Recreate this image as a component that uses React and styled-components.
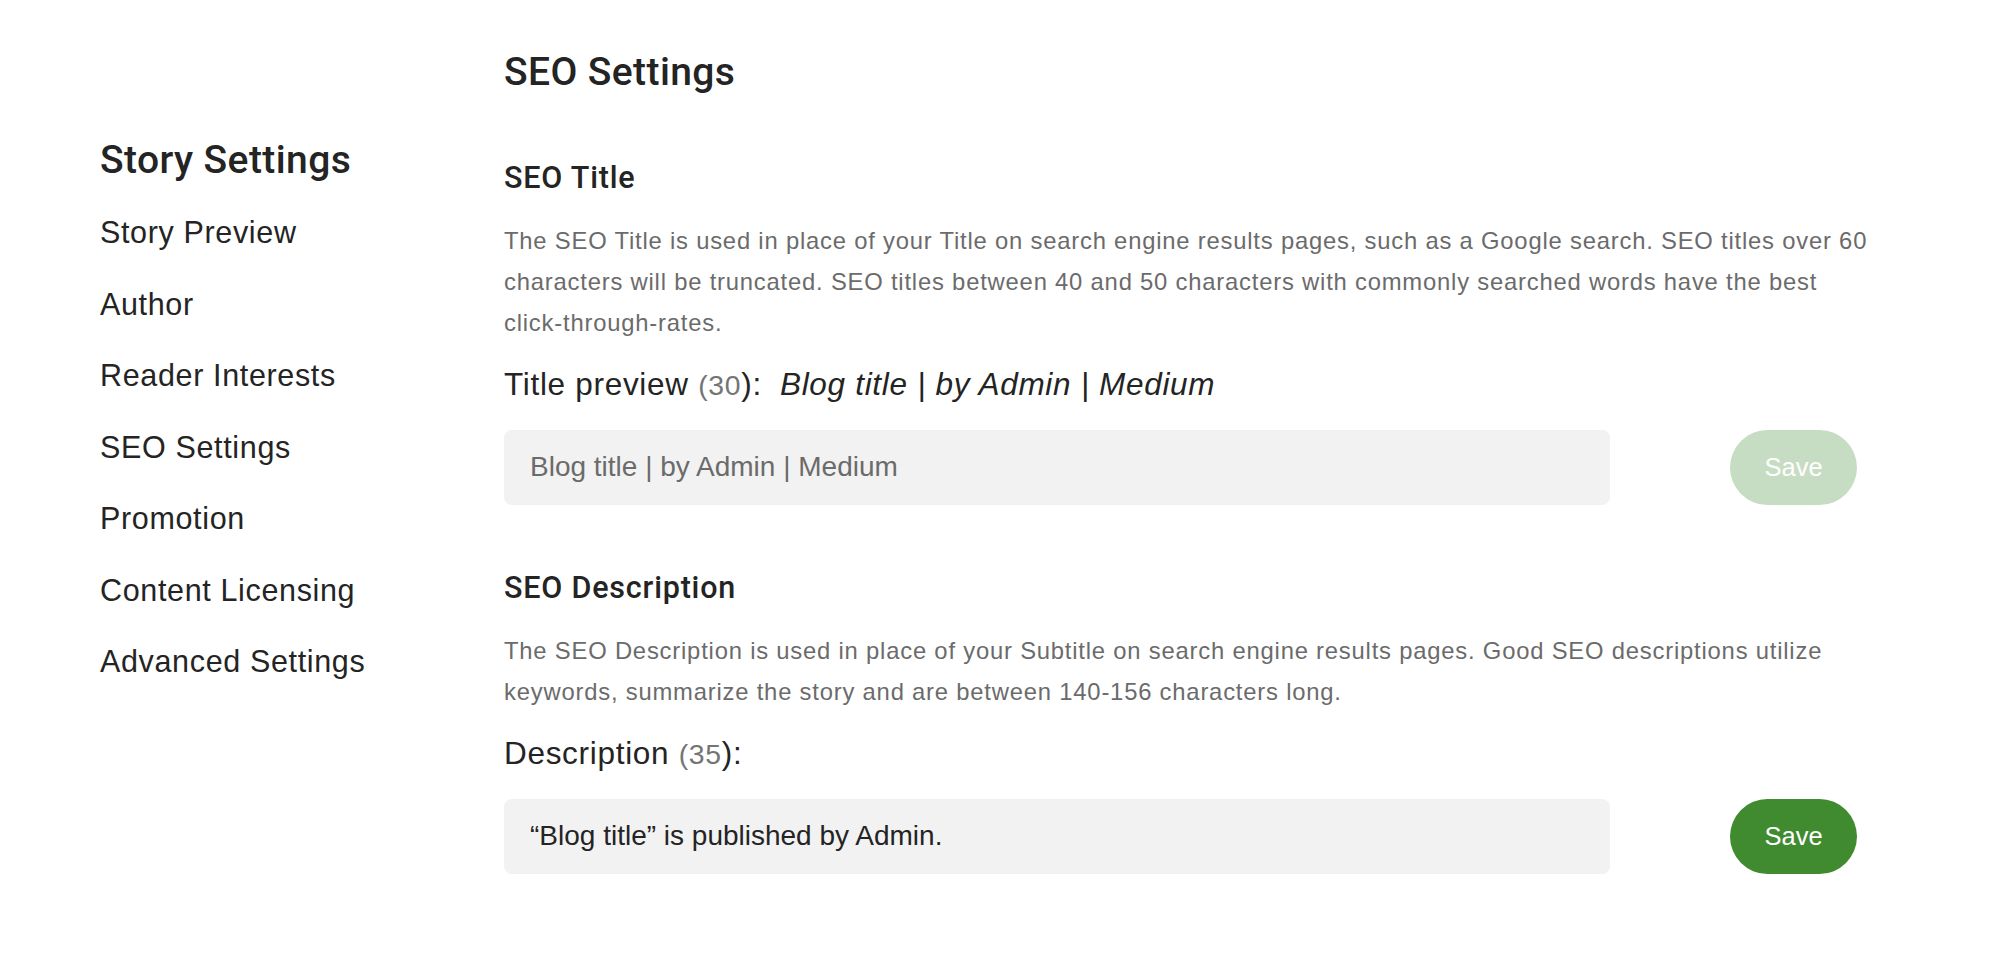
import React from "react";
import styled, { createGlobalStyle } from "styled-components";

const GlobalStyle = createGlobalStyle`
  html, body {
    margin: 0;
    padding: 0;
    background: #ffffff;
  }
  body {
    font-family: "Liberation Sans", Arial, sans-serif;
    color: #242424;
    -webkit-font-smoothing: antialiased;
  }
  * { box-sizing: border-box; }
`;

const headingFont = `"Roboto", "Liberation Sans", Arial, sans-serif`;

const Page = styled.div`
  display: flex;
  align-items: flex-start;
  padding-left: 100px;
  min-height: 962px;
`;

const Sidebar = styled.nav`
  width: 404px;
  flex: none;
  padding-top: 136px;
  display: flex;
  flex-direction: column;
`;

const SidebarTitle = styled.h2`
  margin: 0 0 26px;
  font-family: ${headingFont};
  font-size: 39px;
  line-height: 48px;
  font-weight: 500;
  letter-spacing: 0.4px;
  color: #242424;
`;

const NavList = styled.ul`
  list-style: none;
  margin: 0;
  padding: 0;
  display: flex;
  flex-direction: column;
  gap: 27.5px;
`;

const NavItem = styled.li`
  font-size: 30.5px;
  line-height: 44px;
  letter-spacing: 0.65px;
  color: #242424;
  cursor: pointer;
`;

const Main = styled.main`
  width: 1400px;
  flex: none;
  padding-top: 48px;
  display: flex;
  flex-direction: column;
`;

const PageTitle = styled.h1`
  margin: 0 0 64px;
  font-family: ${headingFont};
  font-size: 39px;
  line-height: 48px;
  font-weight: 500;
  letter-spacing: 0.4px;
  color: #242424;
`;

const Section = styled.section`
  display: flex;
  flex-direction: column;
  & + & {
    margin-top: 65.5px;
  }
`;

const SectionTitle = styled.h3`
  margin: 0 0 24px;
  font-family: ${headingFont};
  font-size: 30.5px;
  line-height: 36px;
  font-weight: 500;
  letter-spacing: 0.8px;
  color: #242424;
`;

const Help = styled.p`
  margin: 0 0 21px;
  font-size: 23.8px;
  line-height: 41px;
  letter-spacing: 0.8px;
  color: #6b6b6b;
`;

const NoBreak = styled.span`
  white-space: nowrap;
`;

const Label = styled.div`
  margin: 0 0 24.5px;
  font-size: 31.5px;
  line-height: 40px;
  letter-spacing: 0.7px;
  color: #242424;
  white-space: nowrap;
`;

const Count = styled.span`
  color: #757575;
  font-size: 0.9em;
`;

const Preview = styled.em`
  margin-left: 18px;
  font-style: italic;
  color: #242424;
`;

const FieldRow = styled.div`
  display: flex;
  align-items: center;
  justify-content: space-between;
  width: 1353px;
`;

const TextInput = styled.input`
  width: 1106px;
  height: 75px;
  padding: 0 26px;
  border: none;
  border-radius: 8px;
  background: #f2f2f2;
  font-family: "Liberation Sans", Arial, sans-serif;
  font-size: 28px;
  color: #242424;
  outline: none;
  &::placeholder {
    color: #6b6b6b;
    opacity: 1;
  }
`;

const SaveButton = styled.button`
  width: 127px;
  height: 75px;
  border: none;
  border-radius: 999px;
  background: ${(p) => (p.disabled ? "#c7ddc3" : "#408a30")};
  color: #ffffff;
  font-family: "Liberation Sans", Arial, sans-serif;
  font-size: 25.5px;
  cursor: ${(p) => (p.disabled ? "default" : "pointer")};
  padding: 0;
`;

const navItems = [
  "Story Preview",
  "Author",
  "Reader Interests",
  "SEO Settings",
  "Promotion",
  "Content Licensing",
  "Advanced Settings",
];

export default function App() {
  return (
    <>
      <GlobalStyle />
      <Page>
        <Sidebar>
          <SidebarTitle>Story Settings</SidebarTitle>
          <NavList>
            {navItems.map((item) => (
              <NavItem key={item}>{item}</NavItem>
            ))}
          </NavList>
        </Sidebar>
        <Main>
          <PageTitle>SEO Settings</PageTitle>

          <Section>
            <SectionTitle>SEO Title</SectionTitle>
            <Help>
              The SEO Title is used in place of your Title on search engine results pages, such as a
              Google search. SEO titles over 60 characters will be truncated. SEO titles between 40 and
              50 characters with commonly searched words have the best{" "}
              <NoBreak>click-through-rates.</NoBreak>
            </Help>
            <Label>
              Title preview <Count>(30</Count>):
              <Preview>Blog title | by Admin | Medium</Preview>
            </Label>
            <FieldRow>
              <TextInput placeholder="Blog title | by Admin | Medium" />
              <SaveButton disabled>Save</SaveButton>
            </FieldRow>
          </Section>

          <Section>
            <SectionTitle>SEO Description</SectionTitle>
            <Help>
              The SEO Description is used in place of your Subtitle on search engine results pages. Good
              SEO descriptions utilize keywords, summarize the story and are between 140-156 characters
              long.
            </Help>
            <Label>
              Description <Count>(35</Count>):
            </Label>
            <FieldRow>
              <TextInput defaultValue={"\u201cBlog title\u201d is published by Admin."} />
              <SaveButton>Save</SaveButton>
            </FieldRow>
          </Section>
        </Main>
      </Page>
    </>
  );
}
